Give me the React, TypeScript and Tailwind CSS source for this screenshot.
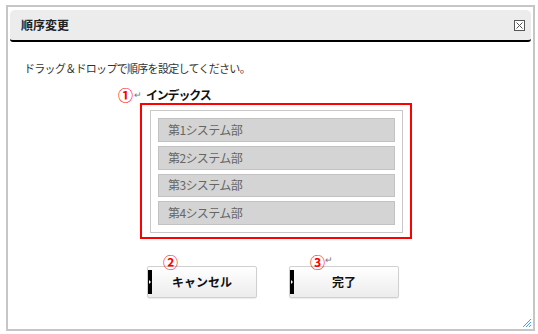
import React from 'react';

const FONT = '"Noto Sans CJK JP", "Liberation Sans", sans-serif';

const DEPARTMENTS = ['第1システム部', '第2システム部', '第3システム部', '第4システム部'];

function CloseIcon() {
  return (
    <svg width="11" height="11" viewBox="0 0 11 11" className="block">
      <rect x="0.5" y="0.5" width="10" height="10" fill="#fff" stroke="#555" />
      <path d="M2.5 2.5 L8.5 8.5 M8.5 2.5 L2.5 8.5" stroke="#555" strokeWidth="1" />
    </svg>
  );
}

function ResizeGrip() {
  return (
    <svg width="11" height="11" viewBox="0 0 11 11" className="block">
      <path d="M10 2 L2 10 M10 5 L5 10 M10 8 L8 10" stroke="#4aa3df" strokeWidth="1" />
    </svg>
  );
}

function ActionButton({ label }: { label: string }) {
  return (
    <button
      type="button"
      className="relative h-[32px] w-[110px] rounded-[2px] border border-[#d0d0d0] bg-gradient-to-b from-white to-[#ececec] shadow-[0_1px_1px_rgba(0,0,0,0.08)] text-[12px] font-bold text-[#111]"
    >
      <span className="absolute left-0 top-[3px] bottom-[3px] w-[4px] bg-black">
        <span className="absolute left-[1px] top-1/2 -translate-y-1/2 border-y-[2px] border-l-[2px] border-y-transparent border-l-white" />
      </span>
      {label}
    </button>
  );
}

export default function App() {
  return (
    <div className="w-[538px] h-[334px] bg-white" style={{ fontFamily: FONT }}>
      <div className="relative ml-[6px] mt-[5px] w-[529px] h-[326px] border-2 border-[#c6c6c6] bg-white">
        {/* header */}
        <div className="mx-[2px] mt-[3px] h-[32px] rounded-t-[5px] rounded-b-[3px] bg-[#ececec] border-b-2 border-black flex items-center justify-between pl-[11px] pr-[6px]">
          <span className="text-[12px] font-bold text-[#222]">順序変更</span>
          <CloseIcon />
        </div>

        {/* body */}
        <div className="pl-[16px] mt-[18px] h-[16px] leading-[16px] text-[11px] tracking-[-0.7px] text-[#333]">
          ドラッグ＆ドロップで順序を設定してください。
        </div>

        <div className="mt-[11px] ml-[110px] flex items-center h-[16px] leading-[16px]">
          <span className="text-[15px] font-bold text-[#ff0000]">①</span>
          <span className="text-[9px] text-[#777] ml-[1px]">↵</span>
          <span className="ml-[4px] text-[12px] font-bold tracking-[-1.2px] text-[#111]">インデックス</span>
        </div>

        <div className="ml-[132px] w-[272px] h-[136px] border-2 border-[#ff0000] pl-[8px] pt-[5px]">
          <div className="w-[253px] h-[123px] border border-[#c8c8c8] bg-white p-[7px] flex flex-col gap-[4px]">
            {DEPARTMENTS.map((name) => (
              <div
                key={name}
                className="h-[24px] w-[237px] border border-[#c2c2c2] bg-[#d4d4d4] pl-[9px] flex items-center text-[12px] tracking-[-0.6px] text-[#666]"
              >
                {name}
              </div>
            ))}
          </div>
        </div>

        <div className="relative mt-[27px] ml-[139px] flex gap-[32px]">
          <ActionButton label="キャンセル" />
          <ActionButton label="完了" />
          <span className="absolute left-[16px] -top-[11px] text-[15px] font-bold leading-[14px] text-[#ff0000]">②</span>
          <span className="absolute left-[163px] -top-[11px] flex items-start leading-[14px]">
            <span className="text-[15px] font-bold text-[#ff0000]">③</span>
            <span className="text-[9px] text-[#777] leading-[10px]">↵</span>
          </span>
        </div>

        <div className="absolute right-[1px] bottom-[1px]">
          <ResizeGrip />
        </div>
      </div>
    </div>
  );
}
